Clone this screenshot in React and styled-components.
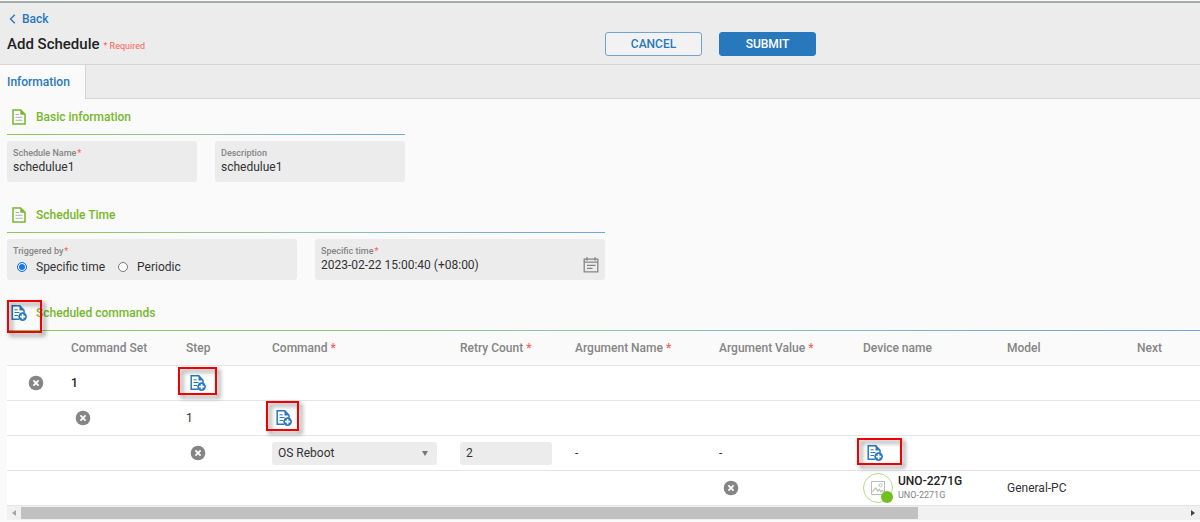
import React, { useRef, useState } from "react";
import styled, { createGlobalStyle } from "styled-components";

const GlobalStyle = createGlobalStyle`
  * {
    box-sizing: border-box;
  }
  body {
    margin: 0;
    background-color: #fafafa;
    color: #333;
    font-family: Roboto, "Liberation Sans", sans-serif;
    font-size: 12px;
  }
`;

const FileIcon = () => (
  <svg width="16" height="16" viewBox="0 0 16 16" aria-hidden="true">
    <path d="M2 1h7.6L14 5.400V15H2z" fill="#fff" stroke="#76b82a" strokeWidth="1.5" />
    <path d="M9.300 1v4.700H14z" fill="#76b82a" />
    <path d="M4.500 5.500h3.500M4.500 8.300h7M4.500 11.300h7" stroke="#aaa" strokeWidth="1.100" />
  </svg>
);

const AddFileIcon = () => (
  <svg width="16" height="16" viewBox="0 0 16 16" aria-hidden="true">
    <path d="M8 14.200H1.200V.8h7.600L13 5.200V8" fill="#fff" stroke="#2878be" strokeWidth="1.500" />
    <path d="M8.500 .8v4.700H13z" fill="#2878be" />
    <path d="M3.500 4.800h3.200M3.500 7.500h5M3.500 10.500h3.500" stroke="#2878be" strokeWidth="1" />
    <circle cx="11.600" cy="11.600" r="4.300" fill="#2878be" />
    <path d="M11.600 9v5.200M9 11.600h5.200" stroke="#fff" strokeWidth="1.600" />
  </svg>
);

const RemoveIcon = () => (
  <svg width="16" height="16" viewBox="0 0 16 16" aria-hidden="true">
    <circle cx="8" cy="8" r="7.300" fill="#858585" />
    <path d="M5.400 5.400l5.200 5.200M10.600 5.400l-5.200 5.200" stroke="#fff" strokeWidth="1.800" />
  </svg>
);

const CalendarIcon = () => (
  <svg width="16" height="16" viewBox="0 0 16 16" aria-hidden="true">
    <path d="M1.200 2.200h13.600v12.600H1.200z" fill="none" stroke="#858585" strokeWidth="1.300" />
    <path d="M1.200 5.200h13.600M4 8.300h8.500M4 11.300h5.500" stroke="#858585" strokeWidth="1.200" />
    <path d="M4 .2v3.200M12 .2v3.200" stroke="#858585" strokeWidth="1.500" />
  </svg>
);

const ImageIcon = () => (
  <svg width="16" height="16" viewBox="0 0 16 16" aria-hidden="true">
    <path d="M1.500 1.500h13v13h-13z" fill="none" stroke="#bdbdbd" />
    <circle cx="10.500" cy="5.200" r="1.500" fill="none" stroke="#bdbdbd" />
    <path d="M2.500 12l3-4 2.500 3 1.500-1.500L11 12l1-1.500 1.500 1.500" fill="none" stroke="#bdbdbd" strokeWidth="1.200" />
  </svg>
);

const AddAction = ({ label, box }) => (
  <IconButton type="button" aria-label={label}>
    <AddFileIcon />
    <Highlight $box={box} />
  </IconButton>
);

const RemoveAction = ({ label }) => (
  <IconButton type="button" aria-label={label}>
    <RemoveIcon />
  </IconButton>
);

const columns = [
  { title: "", width: 64 },
  { title: "Command Set", width: 115 },
  { title: "Step", width: 86 },
  { title: "Command", width: 188, required: true },
  { title: "Retry Count", width: 115, required: true },
  { title: "Argument Name", width: 144, required: true },
  { title: "Argument Value", width: 144, required: true },
  { title: "Device name", width: 144 },
  { title: "Model", width: 130 },
  { title: "Next", width: 420 },
];

const App = () => {
  const scrollRef = useRef(null);
  const [name, setName] = useState("schedulue1");
  const [description, setDescription] = useState("schedulue1");
  const [trigger, setTrigger] = useState("specific");
  const [time, setTime] = useState("2023-02-22 15:00:40 (+08:00)");
  const [retry, setRetry] = useState("2");

  const scrollTable = (distance) => {
    scrollRef.current.scrollLeft += distance;
  };

  return (
    <>
      <GlobalStyle />
      <Header>
        <BackLink href="#back">
          <svg width="7" height="10" viewBox="0 0 7 10" aria-hidden="true">
            <path d="M5.800 .8L1.500 5l4.300 4.200" fill="none" stroke="#2878be" strokeWidth="1.400" />
          </svg>
          Back
        </BackLink>
        <TitleRow>
          <TitleGroup>
            <Title>Add Schedule</Title>
            <RequiredNote>* Required</RequiredNote>
          </TitleGroup>
          <Actions>
            <ActionButton type="button">CANCEL</ActionButton>
            <ActionButton type="button" $primary>
              SUBMIT
            </ActionButton>
          </Actions>
        </TitleRow>
      </Header>
      <Tabs>
        <Tab href="#information">Information</Tab>
      </Tabs>

      <Content>
        <Section $width="398px">
          <SectionTitle>
            <IconSlot>
              <FileIcon />
            </IconSlot>
            <h2>Basic information</h2>
          </SectionTitle>
          <Fields>
            <Field>
              <FieldLabel htmlFor="name">
                Schedule Name<Star>*</Star>
              </FieldLabel>
              <FieldInput id="name" value={name} onChange={(e) => setName(e.target.value)} />
            </Field>
            <Field>
              <FieldLabel htmlFor="description">Description</FieldLabel>
              <FieldInput
                id="description"
                value={description}
                onChange={(e) => setDescription(e.target.value)}
              />
            </Field>
          </Fields>
        </Section>

        <Section $width="598px">
          <SectionTitle>
            <IconSlot>
              <FileIcon />
            </IconSlot>
            <h2>Schedule Time</h2>
          </SectionTitle>
          <Fields>
            <Field role="radiogroup" aria-labelledby="trigger">
              <FieldLabel as="span" id="trigger">
                Triggered by<Star>*</Star>
              </FieldLabel>
              <RadioRow>
                <RadioLabel>
                  <Radio
                    name="trigger"
                    checked={trigger === "specific"}
                    onChange={() => setTrigger("specific")}
                  />
                  Specific time
                </RadioLabel>
                <RadioLabel>
                  <Radio
                    name="trigger"
                    checked={trigger === "periodic"}
                    onChange={() => setTrigger("periodic")}
                  />
                  Periodic
                </RadioLabel>
              </RadioRow>
            </Field>
            <Field>
              <FieldLabel htmlFor="time">
                Specific time<Star>*</Star>
              </FieldLabel>
              <TimeRow>
                <FieldInput id="time" value={time} onChange={(e) => setTime(e.target.value)} />
                <CalendarButton type="button" aria-label="Pick a date">
                  <CalendarIcon />
                </CalendarButton>
              </TimeRow>
            </Field>
          </Fields>
        </Section>

        <Section>
          <SectionTitle>
            <AddAction label="Add command set" box={[0, -1, 35, 33]} />
            <h2>Scheduled commands</h2>
          </SectionTitle>
          <TableScroll ref={scrollRef}>
            <Table>
              <colgroup>
                {columns.map((column) => (
                  <Col key={column.title} $width={column.width} />
                ))}
              </colgroup>
              <thead>
                <tr>
                  {columns.map((column) => (
                    <th key={column.title} scope="col">
                      {column.title}
                      {column.required && <Star> *</Star>}
                    </th>
                  ))}
                </tr>
              </thead>
              <tbody>
                <tr>
                  <RemoveCell>
                    <RemoveAction label="Remove command set" />
                  </RemoveCell>
                  <td>
                    <strong>1</strong>
                  </td>
                  <td>
                    <AddAction label="Add step" box={[-8, -4, 39, 28]} />
                  </td>
                  <td colSpan="7"></td>
                </tr>
                <tr>
                  <td></td>
                  <td>
                    <RemoveAction label="Remove step" />
                  </td>
                  <td>1</td>
                  <td>
                    <AddAction label="Add command" box={[-6, -5, 33, 30]} />
                  </td>
                  <td colSpan="6"></td>
                </tr>
                <tr>
                  <td></td>
                  <td></td>
                  <td>
                    <RemoveAction label="Remove command" />
                  </td>
                  <td>
                    <SelectWrap>
                      <CommandSelect aria-label="Command" defaultValue="OS Reboot">
                        <option>OS Reboot</option>
                      </CommandSelect>
                      <svg width="6" height="5" viewBox="0 0 6 5" aria-hidden="true">
                        <path d="M0 0h6L3 5z" fill="#777" />
                      </svg>
                    </SelectWrap>
                  </td>
                  <td>
                    <RetryInput
                      aria-label="Retry count"
                      value={retry}
                      onChange={(e) => setRetry(e.target.value)}
                    />
                  </td>
                  <td>-</td>
                  <td>-</td>
                  <td>
                    <AddAction label="Add device" box={[-6, -3, 45, 27]} />
                  </td>
                  <td colSpan="2"></td>
                </tr>
                <tr>
                  <td colSpan="6"></td>
                  <td>
                    <RemoveAction label="Remove device" />
                  </td>
                  <td>
                    <Device>
                      <Avatar>
                        <ImageIcon />
                        <OnlineDot />
                      </Avatar>
                      <div>
                        <DeviceName>UNO-2271G</DeviceName>
                        <DeviceModel>UNO-2271G</DeviceModel>
                      </div>
                    </Device>
                  </td>
                  <td>General-PC</td>
                  <td></td>
                </tr>
              </tbody>
            </Table>
          </TableScroll>
          <ScrollBar>
            <ScrollButton type="button" aria-label="Scroll left" onClick={() => scrollTable(-80)}>
              <svg width="4" height="6" viewBox="0 0 4 6" aria-hidden="true">
                <path d="M4 0v6L0 3z" fill="#a3a3a3" />
              </svg>
            </ScrollButton>
            <ScrollTrack>
              <ScrollThumb />
            </ScrollTrack>
            <ScrollButton type="button" aria-label="Scroll right" onClick={() => scrollTable(80)}>
              <svg width="4" height="6" viewBox="0 0 4 6" aria-hidden="true">
                <path d="M0 0v6l4-3z" fill="#444" />
              </svg>
            </ScrollButton>
          </ScrollBar>
        </Section>
      </Content>
    </>
  );
};

export default App;

// Styled components
const Header = styled.header`
  padding: 8px 7px;
  border-top: 2px solid #a9acac;
  border-bottom: 1px solid #d5d5d5;
  margin-top: 1px;
  background-color: #ececec;
`;

const BackLink = styled.a`
  display: inline-flex;
  align-items: center;
  gap: 6px;
  height: 16px;
  padding-left: 2px;
  color: #2878be;
  font-weight: 500;
  line-height: 16px;
  text-decoration: none;
`;

const TitleRow = styled.div`
  display: grid;
  grid-template-columns: 1fr 1fr;
  gap: 10px;
  align-items: center;
  margin-top: 5px;
`;

const TitleGroup = styled.div`
  display: flex;
  align-items: baseline;
  gap: 4px;
`;

const Title = styled.h1`
  margin: 0;
  color: #222;
  font-size: 15px;
  font-weight: 500;
  line-height: 20px;
`;

const RequiredNote = styled.span`
  color: #ff5f55;
  font-size: 9px;
`;

const Actions = styled.div`
  display: flex;
  gap: 17px;
`;

const ActionButton = styled.button`
  width: 97px;
  height: 24px;
  padding: 0;
  border: 1px solid ${({ $primary }) => ($primary ? "#2878be" : "#6fa3d2")};
  border-radius: 3px;
  background-color: ${({ $primary }) => ($primary ? "#2878be" : "#f2f2f2")};
  color: ${({ $primary }) => ($primary ? "white" : "#2878be")};
  font-family: inherit;
  font-size: 12px;
  font-weight: 500;
  cursor: pointer;
`;

const Tabs = styled.nav`
  display: flex;
  height: 34px;
  border-bottom: 1px solid #d5d5d5;
  background-color: #ececec;
`;

const Tab = styled.a`
  height: 34px;
  padding: 0 15px 0 7px;
  border-right: 1px solid #d5d5d5;
  background-color: #fafafa;
  color: #2878be;
  font-weight: 500;
  line-height: 34px;
  text-decoration: none;
`;

const Content = styled.main`
  display: flex;
  flex-direction: column;
  gap: 15px;
  padding-left: 7px;
`;

const Section = styled.section`
  width: 100%;
  max-width: ${({ $width }) => $width || "none"};
`;

const SectionTitle = styled.div`
  display: flex;
  align-items: center;
  gap: 5px;
  height: 36px;
  border-bottom: 1px solid;
  border-image: linear-gradient(to right, #8cc951, #92c3ac 50%, #6fa5da) 1;

  h2 {
    margin: 0;
    color: #76b82a;
    font-size: 12px;
    font-weight: 500;
  }
`;

const IconSlot = styled.span`
  display: flex;
  justify-content: center;
  width: 24px;
`;

const IconButton = styled.button`
  display: flex;
  align-items: center;
  justify-content: center;
  position: relative;
  width: 24px;
  height: 24px;
  padding: 0;
  border: none;
  background: none;
  cursor: pointer;
`;

const Highlight = styled.span`
  position: absolute;
  z-index: 1;
  left: ${({ $box }) => $box[0]}px;
  top: ${({ $box }) => $box[1]}px;
  width: ${({ $box }) => $box[2]}px;
  height: ${({ $box }) => $box[3]}px;
  border: 2px solid #f00000;
  filter: drop-shadow(3px 3px 2px rgba(0, 0, 0, 0.5));
  pointer-events: none;
`;

const Fields = styled.div`
  display: grid;
  grid-template-columns: 1fr 1fr;
  gap: 18px;
  margin-top: 6px;
`;

const Field = styled.div`
  height: 41px;
  padding: 6px;
  border-radius: 3px;
  background-color: #ececec;
`;

const Star = styled.span`
  color: #ff5f55;
`;

const FieldLabel = styled.label`
  display: block;
  color: #858585;
  font-size: 9px;
  font-weight: 500;
  line-height: 12px;

  ${Star} {
    margin-left: 1px;
  }
`;

const FieldInput = styled.input`
  display: block;
  width: 100%;
  height: 16px;
  padding: 0;
  border: none;
  outline: none;
  background: none;
  color: #333;
  font-family: inherit;
  font-size: 12px;
`;

const TimeRow = styled.div`
  display: flex;
`;

const CalendarButton = styled.button`
  height: 16px;
  padding: 0;
  border: none;
  background: none;
  cursor: pointer;
`;

const RadioRow = styled.div`
  display: flex;
  gap: 13px;
  padding: 2px 4px;
`;

const RadioLabel = styled.label`
  display: flex;
  align-items: center;
  gap: 9px;
  line-height: 16px;
`;

const Radio = styled.input.attrs({ type: "radio" })`
  appearance: none;
  width: 10px;
  height: 10px;
  margin: 0;
  border: 1px solid #777;
  border-radius: 50%;
  background-color: white;

  &:checked {
    border-color: #1976f3;
    background-color: #1976f3;
    box-shadow: inset 0 0 0 1px white;
  }
`;

const TableScroll = styled.div`
  overflow-x: auto;
  scrollbar-width: none;
`;

const Table = styled.table`
  width: 1550px;
  table-layout: fixed;
  border-collapse: separate;
  border-spacing: 0;

  th,
  td {
    height: 35px;
    padding: 0 23px 0 0;
    border-bottom: 1px solid #e5e5e5;
    text-align: left;
    white-space: nowrap;
  }
  th {
    color: #858585;
    font-weight: 500;
  }
  td {
    background-color: white;
  }
  strong {
    font-weight: 500;
    color: #222;
  }
`;

const Col = styled.col`
  width: ${({ $width }) => $width}px;
`;

const RemoveCell = styled.td`
  && {
    padding-left: 17px;
  }
`;

const SelectWrap = styled.div`
  display: grid;
  align-items: center;

  > * {
    grid-area: 1 / 1;
  }
  svg {
    justify-self: end;
    margin-right: 9px;
    pointer-events: none;
  }
`;

const CommandSelect = styled.select`
  appearance: none;
  width: 100%;
  height: 23px;
  padding: 0 6px;
  border: none;
  border-radius: 3px;
  background-color: #ececec;
  color: #333;
  font-family: inherit;
  font-size: 12px;
`;

const RetryInput = styled.input`
  display: block;
  width: 100%;
  height: 23px;
  padding: 0 6px;
  border: none;
  border-radius: 3px;
  background-color: #ececec;
  color: #333;
  font-family: inherit;
  font-size: 12px;
`;

const Device = styled.div`
  display: flex;
  align-items: center;
  gap: 5px;
`;

const Avatar = styled.div`
  display: flex;
  align-items: center;
  justify-content: center;
  position: relative;
  flex-shrink: 0;
  width: 30px;
  height: 30px;
  border: 1px solid #b5dc8b;
  border-radius: 50%;
`;

const OnlineDot = styled.span`
  position: absolute;
  right: -1px;
  bottom: -1px;
  width: 12px;
  height: 12px;
  border-radius: 50%;
  background-color: #72bf22;
`;

const DeviceName = styled.div`
  color: #222;
  font-weight: 500;
  line-height: 15px;
`;

const DeviceModel = styled.div`
  color: #858585;
  font-size: 9px;
  line-height: 13px;
`;

const ScrollBar = styled.div`
  display: flex;
  height: 14px;
  background-color: #f1f1f1;
`;

const ScrollButton = styled.button`
  display: flex;
  align-items: center;
  justify-content: center;
  width: 14px;
  padding: 0;
  border: none;
  background: none;
`;

const ScrollTrack = styled.div`
  flex: 1;
  padding: 1px 0;
`;

const ScrollThumb = styled.div`
  width: 77%;
  height: 12px;
  background-color: #c1c1c1;
`;
